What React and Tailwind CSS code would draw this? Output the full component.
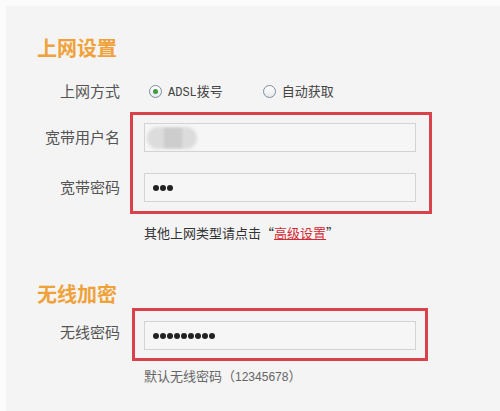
import React from "react";

const CJK = "font-['Noto_Sans_CJK_SC','Noto_Sans',sans-serif]";

const Radio = ({ checked }) => (
  <span className="w-[13px] h-[13px] rounded-full border border-[#7d8c9c] bg-gradient-to-b from-[#ffffff] to-[#e6e9ee] flex items-center justify-center">
    {checked && <span className="w-[5px] h-[5px] rounded-full bg-[#3f9b3f]" />}
  </span>
);

const Dots = ({ count }) => (
  <div className="flex gap-[1px] pl-[8px]">
    {Array.from({ length: count }).map((_, i) => (
      <span key={i} className="w-[6px] h-[6px] rounded-full bg-[#222]" />
    ))}
  </div>
);

const Field = ({ children }) => (
  <div className="w-[272px] h-[29px] border border-[#d3d3d3] bg-[#f6f6f6] flex items-center">
    {children}
  </div>
);

const Label = ({ children }) => (
  <div className="h-[29px] flex items-center justify-end text-[15px] text-[#555]">
    {children}
  </div>
);

export default function App() {
  return (
    <div className={`w-[500px] h-[411px] bg-[#fbfbfb] pl-[6px] pt-[6px] ${CJK}`}>
      <div className="h-full bg-[#f4f4f4] pt-[32px]">
        {/* 上网设置 */}
        <div className="pl-[31px] h-[20px] leading-[20px] text-[20px] font-bold text-[#f0a23a]">
          上网设置
        </div>

        <div className="mt-[23px] h-[20px] flex items-center">
          <div className="w-[114px] text-right text-[15px] text-[#555]">上网方式</div>
          <div className="ml-[29px] flex items-center gap-[6px]">
            <Radio checked />
            <span className="text-[13px] text-[#444]">
              <span className="font-['Liberation_Mono',monospace] text-[12px]">ADSL</span>拨号
            </span>
          </div>
          <div className="ml-[40px] flex items-center gap-[6px]">
            <Radio />
            <span className="text-[13px] text-[#444]">自动获取</span>
          </div>
        </div>

        <div className="mt-[11px] flex">
          <div className="w-[114px] pt-[11px] flex flex-col gap-[21px]">
            <Label>宽带用户名</Label>
            <Label>宽带密码</Label>
          </div>
          <div className="ml-[10px] w-[302px] border-[3px] border-[#d8434b] pt-[8px] pb-[9px] pl-[11px] flex flex-col gap-[21px]">
            <Field>
              <div className="ml-[2px] relative w-[50px] h-[22px]">
                <div className="absolute inset-0 rounded-full bg-[#dcdcdc] blur-[1.5px]" />
                <div className="absolute left-[17px] top-[1px] w-[18px] h-[20px] bg-[#cdcdcd] blur-[1px]" />
              </div>
            </Field>
            <Field>
              <Dots count={3} />
            </Field>
          </div>
        </div>

        <div className="mt-[11px] pl-[138px] h-[16px] leading-[16px] text-[13px] text-[#333]">
          其他上网类型请点击“<span className="text-[#d42a35] underline">高级设置</span>”
        </div>

        {/* 无线加密 */}
        <div className="mt-[43px] pl-[31px] h-[20px] leading-[20px] text-[20px] font-bold text-[#f0a23a]">
          无线加密
        </div>

        <div className="mt-[4px] flex">
          <div className="w-[114px] pt-[10px]">
            <Label>无线密码</Label>
          </div>
          <div className="ml-[12px] w-[296px] border-[3px] border-[#d8434b] pt-[10px] pb-[8px] pl-[9px]">
            <Field>
              <Dots count={9} />
            </Field>
          </div>
        </div>

        <div className="mt-[8px] pl-[138px] h-[14px] leading-[14px] text-[13px] text-[#666]">
          默认无线密码（<span className="font-['Liberation_Sans',sans-serif] text-[12px]">12345678</span>）
        </div>
      </div>
    </div>
  );
}
